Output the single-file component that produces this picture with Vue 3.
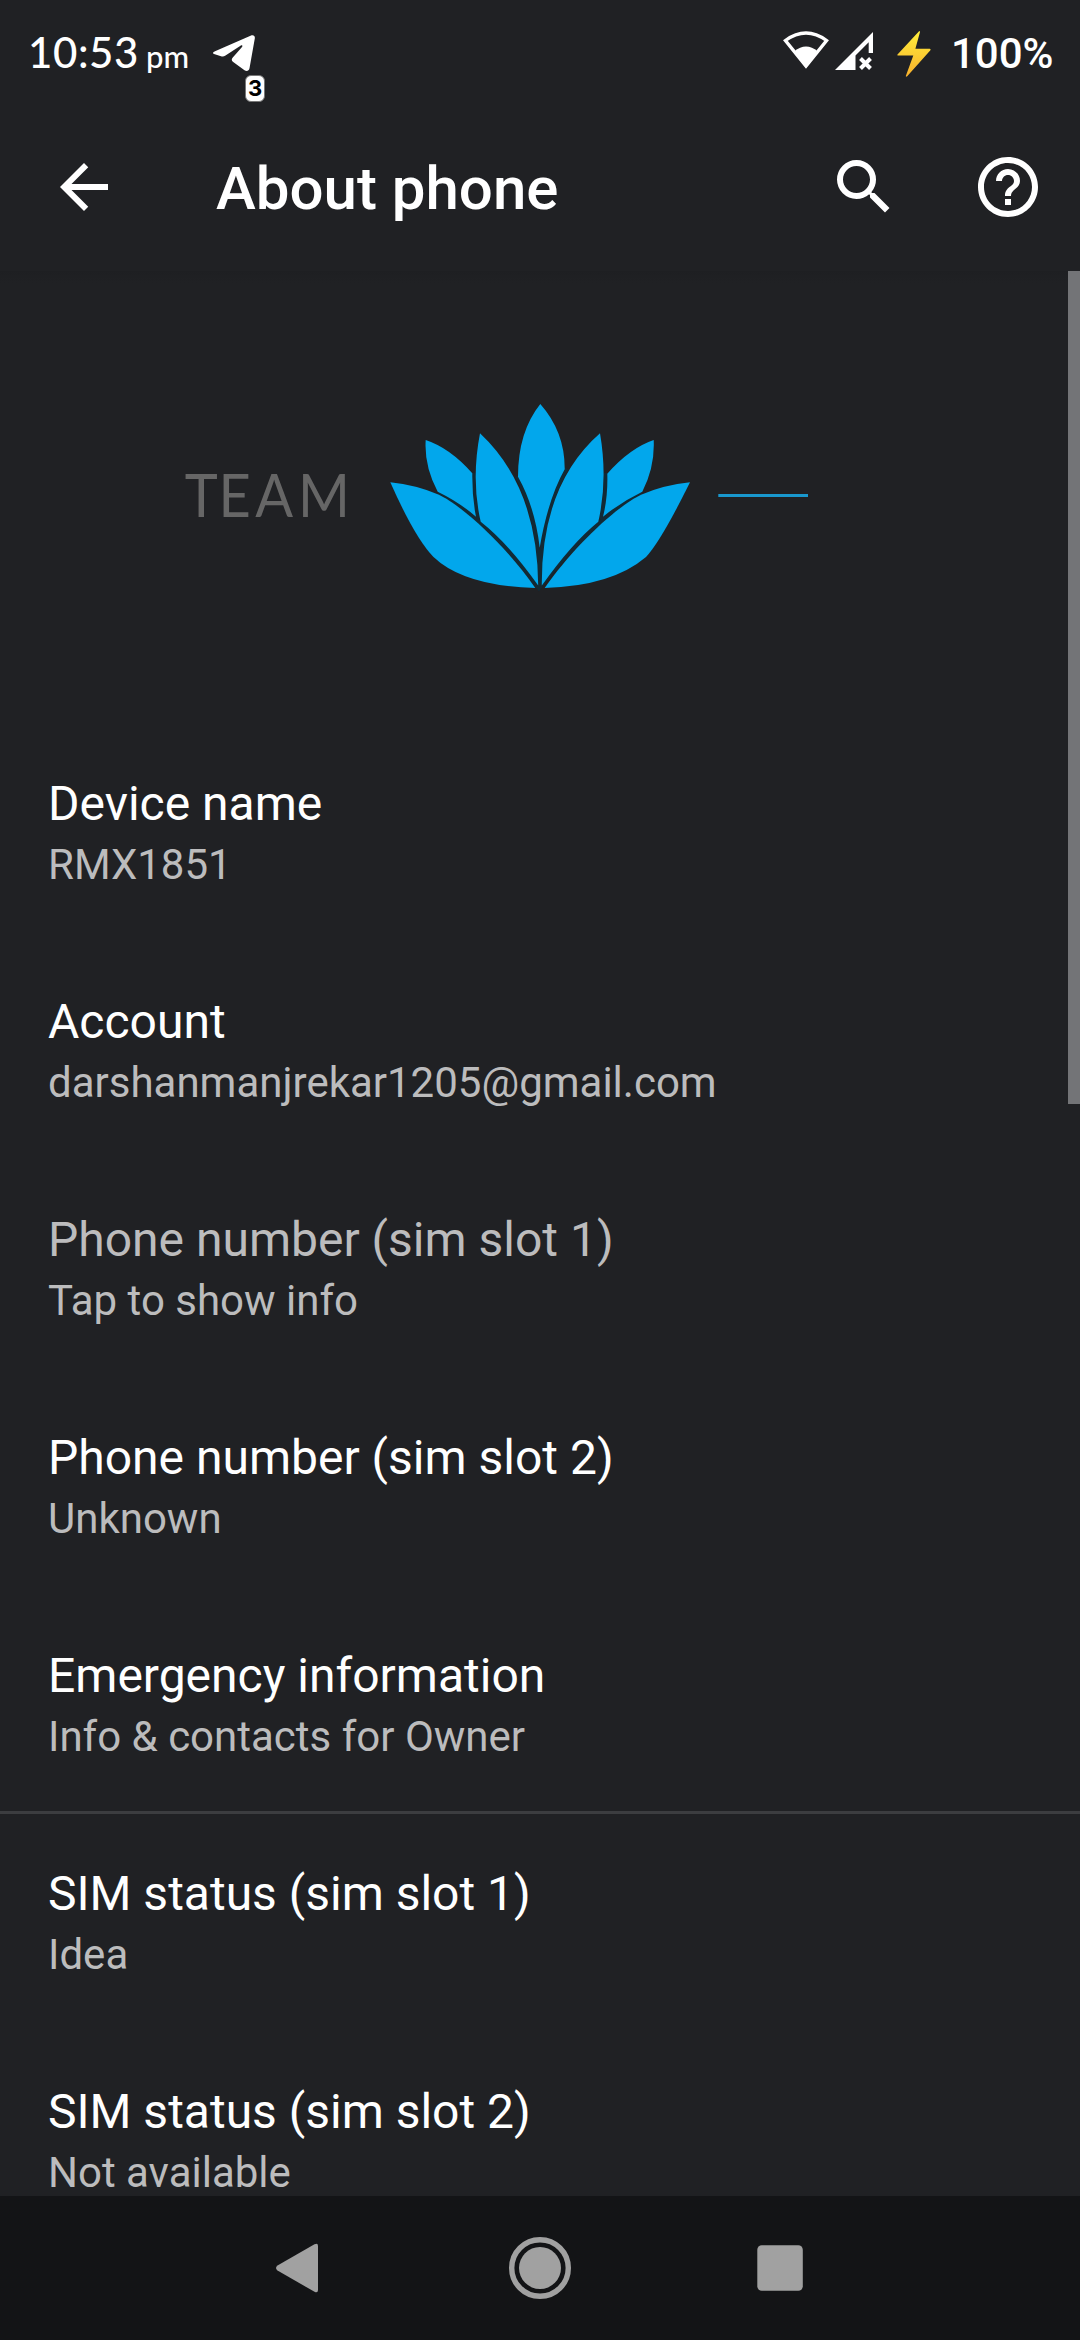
<script setup>
const items = [
  { title: 'Device name', summary: 'RMX1851' },
  { title: 'Account', summary: 'darshanmanjrekar1205@gmail.com' },
  { title: 'Phone number (sim slot 1)', summary: 'Tap to show info', disabled: true },
  { title: 'Phone number (sim slot 2)', summary: 'Unknown' },
  { title: 'Emergency information', summary: 'Info & contacts for Owner' },
  { title: 'SIM status (sim slot 1)', summary: 'Idea', divided: true },
  { title: 'SIM status (sim slot 2)', summary: 'Not available' },
]
</script>

<template>
  <div class="screen">
    <div class="status-bar">
      <div class="status-left">
        <span class="time">10:53</span>
        <span class="meridiem">pm</span>
        <div class="notification">
          <svg class="telegram" viewBox="0 0 42 36">
            <path d="M2 16.2 37.5 .7C40.5-.5 42.200.8 41.800 3.600L36.500 33.200C36 36 33.500 36.600 31.500 35.200L20.200 27C18.300 25.500 18.300 24 20 22.200L28.800 12.300C30.200 10.800 29.200 9.800 27.500 10.700L12.500 20.500C11 21.500 9.500 21.600 8 21.200L1.800 19.300C-.6 18.500-.4 17.200 2 16.200Z" fill="#fff" />
          </svg>
          <span class="count">3</span>
        </div>
      </div>
      <div class="status-right">
        <svg class="wifi" viewBox="0 0 46 38">
          <path d="M2.400 9.500Q23-5.500 43.600 9.500L23 35Z" fill="none" stroke="#fff" stroke-width="3.300" />
          <path d="M11.200 20.500Q23 10.500 34.800 20.500L23 37Z" fill="#fff" />
        </svg>
        <svg class="signal" viewBox="0 0 38 38">
          <path d="M38 0V21H33.700V10.300L20.500 23.500V38H0Z" fill="#fff" />
          <path d="m25.500 26.500 10 10m0-10-10 10" stroke="#fff" stroke-width="4" />
        </svg>
        <svg class="bolt" viewBox="0 0 34 46">
          <defs>
            <linearGradient id="boltFill" x1="0" y1="0" x2="0" y2="1">
              <stop offset="0" stop-color="#ffee3b" />
              <stop offset="1" stop-color="#f8b02c" />
            </linearGradient>
          </defs>
          <path d="M21.800.4 .5 23.500Q0 24.500 1.200 24.500H16.300L8.800 45Q9 46.400 10.200 45.300L33.400 19.200Q34 18 32.600 17.800H18.400L23 1Q22.800-.4 21.800.4Z" fill="url(#boltFill)" />
        </svg>
        <span class="battery">100%</span>
      </div>
    </div>

    <header class="toolbar">
      <svg class="icon" viewBox="0 0 24 24"><path d="M20 11H7.830l5.590-5.590L12 4l-8 8 8 8 1.410-1.410L7.830 13H20z" /></svg>
      <h1>About phone</h1>
      <div class="actions">
        <svg class="icon" viewBox="0 0 24 24"><path d="M15.500 14h-.79l-.28-.27A6.471 6.471 0 0 0 16 9.500 6.500 6.500 0 1 0 9.500 16c1.610 0 3.090-.59 4.230-1.570l.27.28v.79l5 4.990L20.490 19zm-6 0C7.010 14 5 11.990 5 9.500S7.010 5 9.500 5 14 7.010 14 9.500 11.990 14 9.500 14" /></svg>
        <svg class="icon" viewBox="0 0 24 24"><path d="M11 18h2v-2h-2zm1-16C6.480 2 2 6.480 2 12s4.480 10 10 10 10-4.480 10-10S17.520 2 12 2m0 18c-4.410 0-8-3.590-8-8s3.590-8 8-8 8 3.590 8 8-3.590 8-8 8m0-14c-2.210 0-4 1.790-4 4h2c0-1.100.9-2 2-2s2 .9 2 2c0 2-3 1.750-3 5h2c0-2.250 3-2.500 3-5 0-2.210-1.790-4-4-4" /></svg>
      </div>
    </header>

    <main class="content">
      <svg class="logo" viewBox="0 271 1080 450">
        <text x="196.500 232.500 271.500 317" y="517.300" transform="scale(.94 1)">TEAM</text>
        <g class="seams">
          <path d="M439 492.500C462 503 508 545 539 588C572 545 618 503 641 492.500" />
          <path d="M517 476Q540 520 540 588Q540 515 566.500 468.500" />
          <path d="M473.500 473Q473 500 478.500 519M606 473Q606 500 600.500 519" />
        </g>
        <g class="petals">
          <path d="M540.300 404Q565 432 564.700 469.300Q548 499 539.700 547.700Q535 507 518 476.700Q518 432 540.300 404Z" />
          <path d="M480 433.300Q537.500 487 538.200 585.500Q508 543 480.700 521.700Q471 480 480 433.300Z" />
          <path d="M600 433.300Q541 485 541.800 585.500Q572 543 598.300 521.700Q608 480 600 433.300Z" />
          <path d="M425.700 440Q450 448 472.300 473.300Q472 497 476 516.700Q459 502 437.700 491.700Q424 466 425.700 440Z" />
          <path d="M653.700 440Q630 448 607.300 473.700Q608 497 603 516.700Q621 502 642.300 491.700Q655 467 653.700 440Z" />
          <path d="M390.300 482.300Q416 485 438.300 494.500C462 505 507 547 535.300 588Q464 586 433.500 557Q415 538 390.300 482.300Z" />
          <path d="M690 482.300Q664 485 641.700 494.500C618 505 573 547 544.700 588Q612 586 646 557Q661 541 690 482.300Z" />
        </g>
        <rect class="dash" x="718.300" y="494" width="89.700" height="3" />
      </svg>

      <section
        v-for="item in items"
        :key="item.title"
        class="preference"
        :class="{ disabled: item.disabled, divided: item.divided }"
      >
        <div class="title">{{ item.title }}</div>
        <div class="summary">{{ item.summary }}</div>
      </section>
      <div class="scrollbar"></div>
    </main>

    <nav class="nav-bar">
      <svg viewBox="0 0 240 144"><path d="M134.500 48.200Q138 46.500 138 50V94Q138 97.500 134.500 95.800L97.500 74.500Q94.500 72 97.500 69.500Z" /></svg>
      <svg viewBox="0 0 240 144">
        <circle cx="120" cy="72" r="28.300" fill="none" stroke="#a1a1a1" stroke-width="5.400" />
        <circle cx="120" cy="72" r="21" />
      </svg>
      <svg viewBox="0 0 240 144"><rect x="97.300" y="49.200" width="45.500" height="45.500" rx="4.500" /></svg>
    </nav>
  </div>
</template>

<style>
body {
  background: #202124;
}
</style>

<style scoped>
.screen {
  width: 1080px;
  height: 2340px;
  display: flex;
  flex-direction: column;
  overflow: hidden;
  background: #202124;
  color: #fff;
  font-family: Roboto, sans-serif;
}

svg {
  display: block;
  flex: none;
}

.status-bar {
  height: 103px;
  flex: none;
  display: flex;
  justify-content: space-between;
  padding: 0 28px 0 28px;
  box-sizing: border-box;
}

.status-left {
  display: flex;
  align-items: baseline;
  font-family: Lato, sans-serif;
  line-height: 105px;
}

.time {
  width: 118px;
  font-size: 42px;
  font-weight: 500;
  letter-spacing: 0.6px;
}

.meridiem {
  width: 67px;
  font-size: 31px;
  font-weight: 500;
}

.notification {
  position: relative;
  align-self: flex-start;
  padding-top: 35px;
}

.telegram {
  width: 42px;
  height: 36px;
}

.count {
  position: absolute;
  left: 32px;
  top: 75px;
  width: 20px;
  height: 27px;
  border: 1px solid #777;
  border-radius: 6px;
  box-sizing: border-box;
  background: #fff;
  color: #000;
  font: 700 22px/25px Inter, sans-serif;
  display: flex;
  justify-content: center;
}

.status-right {
  display: flex;
  align-items: flex-start;
}

.wifi {
  width: 46px;
  height: 38px;
  margin-top: 31px;
}

.signal {
  width: 38px;
  height: 38px;
  margin: 32px 24px 0 6px;
}

.bolt {
  width: 34px;
  height: 46px;
  margin: 31px 20px 0 0;
}

.battery {
  width: 101px;
  font-size: 42px;
  font-weight: 500;
  line-height: 107px;
}

.toolbar {
  height: 168px;
  flex: none;
  display: flex;
  align-items: center;
  padding: 0 36px 0 48px;
  box-sizing: border-box;
}

.icon {
  width: 72px;
  height: 72px;
  fill: #fff;
}

h1 {
  margin: 4px 0 0 96px;
  font-size: 60px;
  font-weight: 500;
  line-height: 72px;
}

.actions {
  display: flex;
  gap: 72px;
  margin-left: auto;
}

.content {
  position: relative;
  flex: 1;
  min-height: 0;
  overflow: hidden;
  background: linear-gradient(#1e1f22, #202124 12px);
}

.logo {
  width: 1080px;
  height: 450px;
}

.logo text {
  fill: #666;
  font: 400 59.500px Lato, sans-serif;
}

.petals {
  fill: #02a7ec;
}

.seams {
  fill: none;
  stroke: #122a35;
  stroke-width: 4;
}

.dash {
  fill: #1998ce;
}

.preference {
  height: 218px;
  padding: 51px 48px 0;
  box-sizing: border-box;
}

.preference.divided {
  border-top: 3px solid #3c3d40;
  padding-top: 48px;
}

.title {
  font-size: 48px;
  line-height: 64px;
}

.summary {
  font-size: 42px;
  line-height: 57px;
  color: #bcbcbd;
}

.disabled .title {
  color: #bcbcbd;
}

.scrollbar {
  position: absolute;
  top: 0;
  right: 0;
  width: 12px;
  height: 833px;
  background: #737477;
}

.nav-bar {
  height: 144px;
  flex: none;
  display: flex;
  justify-content: center;
  background: #131416;
}

.nav-bar svg {
  width: 240px;
  height: 144px;
  fill: #a1a1a1;
}
</style>
